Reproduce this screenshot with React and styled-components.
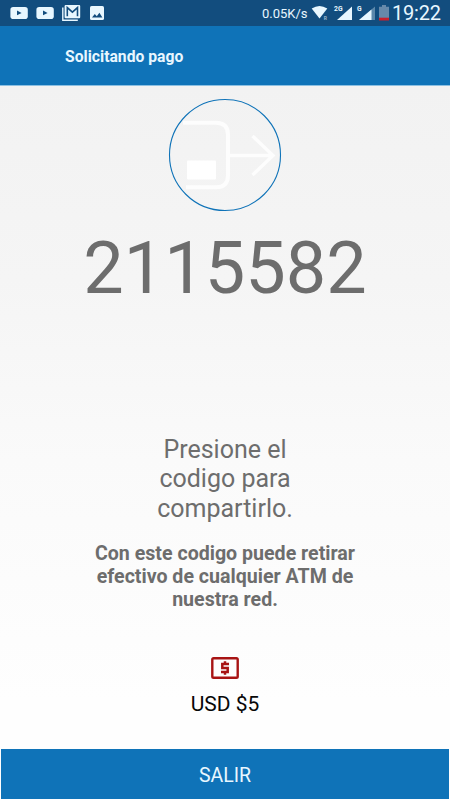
import styled, { createGlobalStyle } from 'styled-components';

const COLOURS = {
  PRIMARY: '#0f73b8',
  PRIMARY_DARK: '#124d7e',
  TEXT: '#6d6d6d',
  DANGER: '#a81414',
};

const GlobalStyle = createGlobalStyle`
  * {
    box-sizing: border-box;
  }
  body {
    margin: 0;
    font-family: Roboto, sans-serif;
  }
`;

const Screen = styled.div`
  display: flex;
  flex-direction: column;
  width: 450px;
  height: 800px;
  overflow: hidden;
  background: linear-gradient(#f2f2f2 86px, #f5f5f5 280px, #fafafa 460px, #fefefe 700px);
`;

const StatusBar = styled.div`
  display: flex;
  justify-content: space-between;
  height: 26px;
  flex: none;
  padding: 0 9px 0 10px;
  color: #e8f7ff;
  background: ${COLOURS.PRIMARY_DARK};
`;

const StatusGroup = styled.div`
  display: flex;
  align-items: center;
  height: 26px;

  svg {
    display: block;
    flex: none;
  }
`;

const Speed = styled.span`
  width: 49px;
  font-size: 13px;
  line-height: 27px;
  white-space: nowrap;
`;

const Clock = styled.span`
  width: 49px;
  font-size: 20px;
  line-height: 29px;
  letter-spacing: -0.2px;
  white-space: nowrap;
`;

const Header = styled.header`
  flex: none;
  height: 60px;
  padding-left: 65px;
  color: #e8f7ff;
  background: ${COLOURS.PRIMARY};
  border-bottom: 1px solid #8cc0e2;
`;

const Title = styled.h1`
  margin: 0;
  font-size: 15.7px;
  font-weight: 700;
  line-height: 62px;
`;

const Content = styled.main`
  display: flex;
  flex: 1;
  flex-direction: column;
  align-items: center;
  text-align: center;
  color: ${COLOURS.TEXT};
`;

const Badge = styled.svg`
  display: block;
  flex: none;
  margin-top: 12px;
`;

const Code = styled.div`
  margin-top: 15px;
  font-size: 72px;
  line-height: 84px;
`;

const ShareHint = styled.p`
  width: 160px;
  margin: 123.5px 0 0;
  font-size: 25px;
  line-height: 29.5px;
`;

const Notice = styled.p`
  width: 280px;
  margin: 19px 0 0;
  font-size: 19.6px;
  font-weight: 700;
  line-height: 23px;
`;

const MoneyIcon = styled.svg`
  display: block;
  margin-top: 46px;
`;

const Amount = styled.div`
  margin-top: 13px;
  font-size: 21px;
  line-height: 24px;
  color: #080808;
`;

const ExitButton = styled.button`
  flex: none;
  height: 50px;
  margin: 0 1px 1px;
  padding: 3px 0 0;
  font-family: inherit;
  font-size: 19.5px;
  color: #e8f7ff;
  background: ${COLOURS.PRIMARY};
  border: 0;
`;

const VideoIcon = () => (
  <svg width="26" height="26" viewBox="0 0 26 26">
    <rect x="0.4" y="7" width="17.4" height="12" rx="2.8" fill="#e8f7ff" />
    <path d="M7 10.5v4.800l4.600-2.400z" fill={COLOURS.PRIMARY_DARK} />
  </svg>
);

const MailIcon = () => (
  <svg width="28" height="26" viewBox="0 0 28 26">
    <path d="M.8 7.5v12.7h15" fill="none" stroke="#e8f7ff" strokeWidth="1.4" />
    <rect x="2.6" y="5" width="15.6" height="13.2" rx="1" fill="#e8f7ff" />
    <path
      d="M5.3 16.200V7.600l5.100 4.600 5.100-4.600v8.600"
      fill="none"
      stroke={COLOURS.PRIMARY_DARK}
      strokeWidth="1.6"
    />
  </svg>
);

const PhotoIcon = () => (
  <svg width="14" height="26" viewBox="0 0 14 26">
    <rect y="6" width="14" height="14" rx="1.6" fill="#e8f7ff" />
    <path d="M2 17.5l2.8-3.6 2 2.3 2.6-3.4 3 4.7z" fill={COLOURS.PRIMARY_DARK} />
  </svg>
);

const SignalIcons = () => (
  <svg width="81" height="26" viewBox="310 0 81 26" fill="#e8f7ff">
    <path d="M310.7 8.5Q318.5 3.500 326.300 8.500L318.500 18.500z" />
    <text x="322.800" y="20" fontSize="5" fontWeight="700" opacity="0.6">R</text>
    <text x="333" y="11.300" fontSize="6.800" fontWeight="700">2G</text>
    <path d="M351 6.500V20h-15z" />
    <text x="356" y="11.300" fontSize="6.800" fontWeight="700">G</text>
    <path d="M374 6.500V20H358z" opacity="0.35" />
    <path d="M370.500 9.500V20H358z" />
    <path d="M381 5h4v1.700h3V18h-10V6.700h3z" fill="#6689aa" />
    <path d="M378 17.700h10v2.800h-10z" fill="#c9202d" />
  </svg>
);

const TransferBadge = () => (
  <Badge width="114" height="114" viewBox="0 0 114 114">
    <circle cx="57" cy="57" r="55.5" fill="none" stroke={COLOURS.PRIMARY} strokeWidth="1.1" />
    <g fill="none" stroke="#fff" strokeOpacity="0.8" strokeWidth="4">
      <path d="M15 24.7h33q12 0 12 12v40.500q0 12-12 12H18" />
      <path d="M62 57.500h42M84.500 38l20.500 19.500L84.500 77" strokeWidth="3.4" />
    </g>
    <rect x="19" y="62.500" width="29" height="19" rx="1" fill="#fff" />
  </Badge>
);

const DollarBill = () => (
  <MoneyIcon width="28" height="22" viewBox="0 0 28 22">
    <rect
      x="1.3"
      y="1.3"
      width="25.4"
      height="19.4"
      rx="1.3"
      fill="none"
      stroke={COLOURS.DANGER}
      strokeWidth="2.4"
    />
    <path
      d="M18 6.900h-6.700v4.100h5.400v4.100H10M14 4.300v3M14 14.500v3.200"
      fill="none"
      stroke={COLOURS.DANGER}
      strokeWidth="2.5"
    />
  </MoneyIcon>
);

export default function App() {
  return (
    <>
      <GlobalStyle />
      <Screen>
        <StatusBar>
          <StatusGroup>
            <VideoIcon />
            <VideoIcon />
            <MailIcon />
            <PhotoIcon />
          </StatusGroup>
          <StatusGroup>
            <Speed>0.05K/s</Speed>
            <SignalIcons />
            <Clock>19:22</Clock>
          </StatusGroup>
        </StatusBar>
        <Header>
          <Title>Solicitando pago</Title>
        </Header>
        <Content>
          <TransferBadge />
          <Code>2115582</Code>
          <ShareHint>
            Presione el
            <br />
            codigo para
            <br />
            compartirlo.
          </ShareHint>
          <Notice>
            Con este codigo puede retirar
            <br />
            efectivo de cualquier ATM de
            <br />
            nuestra red.
          </Notice>
          <DollarBill />
          <Amount>USD $5</Amount>
        </Content>
        <ExitButton type="button">SALIR</ExitButton>
      </Screen>
    </>
  );
}
